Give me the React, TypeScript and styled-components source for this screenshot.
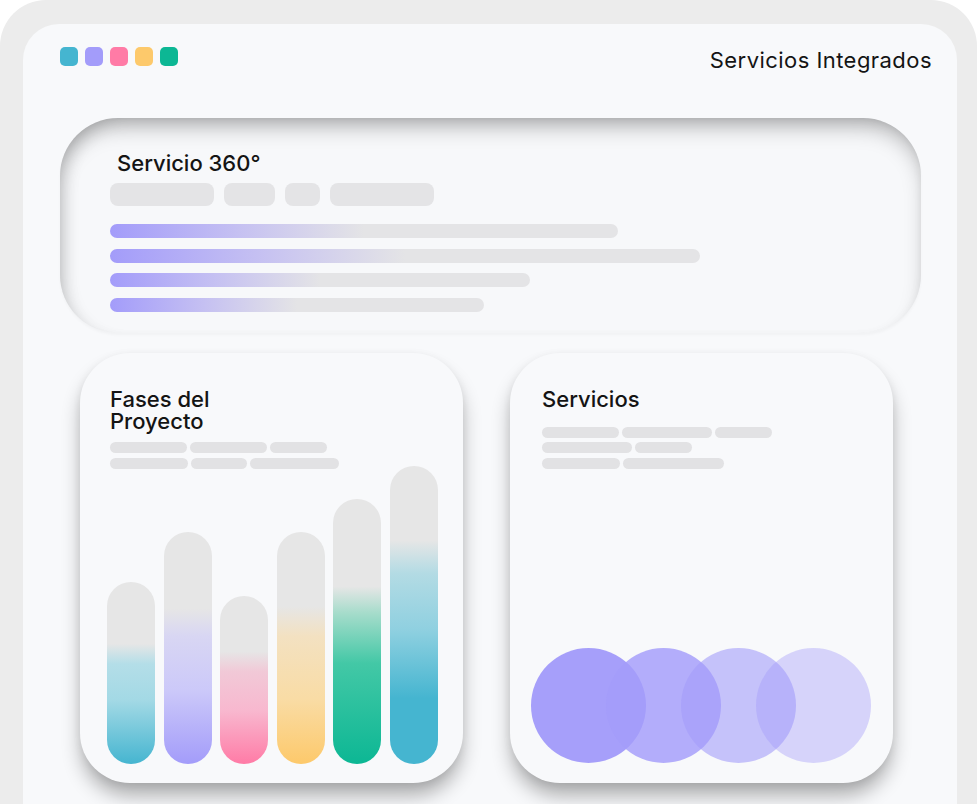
import React from "react";
import styled, { createGlobalStyle } from "styled-components";

const Global = createGlobalStyle`
  html, body { margin: 0; padding: 0; background: #ffffff; overflow: hidden; }
  body { font-family: Inter, "Liberation Sans", sans-serif; color: #141414; }
  * { box-sizing: border-box; }
`;

const Frame = styled.div`
  width: 977px;
  height: 860px;
  background: #ececec;
  border-radius: 46px 46px 0 0;
  padding: 24px 20px 0 23px;
`;

const Panel = styled.div`
  height: 100%;
  background: #f8f9fb;
  border-radius: 36px 36px 0 0;
  padding-top: 23px;
  display: flex;
  flex-direction: column;
`;

const Header = styled.header`
  height: 71px;
  padding: 0 25px 0 37px;
  display: flex;
  justify-content: space-between;
  align-items: flex-start;
`;

const Dots = styled.div`
  display: flex;
  gap: 7px;
`;

const Dot = styled.span<{ $c: string }>`
  width: 18px;
  height: 19px;
  border-radius: 5px;
  background: ${(p) => p.$c};
`;

const BrandTitle = styled.div`
  font-size: 22px;
  line-height: 26px;
  font-weight: 400;
  letter-spacing: 0.45px;
  color: #141414;
`;

const HeroCard = styled.section`
  margin: 0 36px 0 37px;
  height: 215px;
  border-radius: 58px;
  background: #f7f8fa;
  padding: 32px 0 21px 50px;
  box-shadow: inset 0 14px 22px -6px rgba(0, 0, 0, 0.28),
    inset 10px 6px 18px -8px rgba(0, 0, 0, 0.16),
    inset -4px 0 12px -6px rgba(0, 0, 0, 0.06),
    0 2px 3px rgba(0, 0, 0, 0.03);
  display: flex;
  flex-direction: column;
`;

const HeroTitle = styled.h1`
  margin: 0 0 7px 7px;
  font-size: 22px;
  line-height: 26px;
  font-weight: 500;
  color: #141414;
`;

const ChipRow = styled.div`
  display: flex;
  gap: 10px;
`;

const Chip = styled.span<{ $w: number }>`
  width: ${(p) => p.$w}px;
  height: 23px;
  border-radius: 8px;
  background: #e4e4e6;
`;

const Lines = styled.div`
  margin-top: 18px;
  display: flex;
  flex-direction: column;
  gap: 10.7px;
`;

const GradLine = styled.span<{ $w: number }>`
  width: ${(p) => p.$w}px;
  height: 14px;
  border-radius: 7px;
  background: linear-gradient(90deg, #a39cfa 0%, #c5c0f2 25%, #e4e4e6 50%, #e4e4e6 100%);
`;

const CardsRow = styled.div`
  margin: 19.5px 0 0 57px;
  display: flex;
  gap: 47px;
`;

const Card = styled.section<{ $pl: number }>`
  width: 383px;
  height: 430px;
  border-radius: 50px;
  background: #f8f9fb;
  padding-top: 35px;
  display: flex;
  flex-direction: column;
  --pl: ${(p) => p.$pl}px;
  box-shadow: 0 14px 20px -2px rgba(0, 0, 0, 0.32),
    0 2px 8px rgba(0, 0, 0, 0.06);
`;

const CardTitle = styled.h2`
  margin: 0;
  padding-left: var(--pl);
  font-size: 22px;
  line-height: 22px;
  font-weight: 500;
  color: #141414;
`;

const SkeletonBlock = styled.div<{ $mt: number }>`
  margin-top: ${(p) => p.$mt}px;
  padding-left: var(--pl);
  display: flex;
  flex-direction: column;
  gap: 4.5px;
`;

const SkeletonRow = styled.div`
  display: flex;
  gap: 3px;
`;

const Pill = styled.span<{ $w: number }>`
  width: ${(p) => p.$w}px;
  height: 11px;
  border-radius: 6px;
  background: #e2e2e4;
`;

const BarArea = styled.div`
  flex: 1;
  min-height: 0;
  margin-top: -12px;
  display: flex;
  align-items: flex-end;
  gap: 8.6px;
  padding: 0 25px 19px 27px;
`;

const Bar = styled.div<{ $h: number; $bg: string }>`
  width: 48px;
  height: ${(p) => p.$h}px;
  border-radius: 24px;
  background: ${(p) => p.$bg};
  flex: none;
`;

const CircleArea = styled.div`
  flex: 1;
  display: flex;
  align-items: flex-end;
  padding: 0 0 20px 21px;
`;

const Circle = styled.span<{ $a: number }>`
  width: 115px;
  height: 115px;
  border-radius: 50%;
  background: rgba(163, 156, 250, ${(p) => p.$a});
  flex: none;
  & + & {
    margin-left: -40px;
  }
`;

const dots = ["#45b5d0", "#a39cfa", "#ff7ba6", "#fdc96b", "#0cb794"];

const grey = "#e6e6e6";
const bars = [
  { h: 182, bg: `linear-gradient(180deg, ${grey} 0%, ${grey} 34%, #b4dee8 45%, #a3d9e5 65%, #45b5d0 100%)` },
  { h: 232, bg: `linear-gradient(180deg, ${grey} 0%, ${grey} 33%, #d8d6f3 45%, #ccc9f9 68%, #a39cfa 100%)` },
  { h: 168, bg: `linear-gradient(180deg, ${grey} 0%, ${grey} 33%, #f1c9d7 45%, #f8b8cf 68%, #ff7ba6 100%)` },
  { h: 232, bg: `linear-gradient(180deg, ${grey} 0%, ${grey} 32%, #f3e1c1 45%, #f9dca5 72%, #fdc96b 100%)` },
  { h: 265, bg: `linear-gradient(180deg, ${grey} 0%, ${grey} 33%, #a6dccb 43%, #43c8a6 62%, #0cb794 100%)` },
  { h: 298, bg: `linear-gradient(180deg, ${grey} 0%, ${grey} 25%, #b3dbe4 36%, #8fd0e0 55%, #45b5d0 78%, #45b5d0 100%)` },
];

export default function App() {
  return (
    <>
      <Global />
      <Frame>
        <Panel>
          <Header>
            <Dots>
              {dots.map((c) => (
                <Dot key={c} $c={c} />
              ))}
            </Dots>
            <BrandTitle>Servicios Integrados</BrandTitle>
          </Header>

          <HeroCard>
            <HeroTitle>Servicio 360°</HeroTitle>
            <ChipRow>
              <Chip $w={104} />
              <Chip $w={51} />
              <Chip $w={35} />
              <Chip $w={104} />
            </ChipRow>
            <Lines>
              <GradLine $w={508} />
              <GradLine $w={590} />
              <GradLine $w={420} />
              <GradLine $w={374} />
            </Lines>
          </HeroCard>

          <CardsRow>
            <Card $pl={30}>
              <CardTitle>
                Fases del
                <br />
                Proyecto
              </CardTitle>
              <SkeletonBlock $mt={10.5}>
                <SkeletonRow>
                  <Pill $w={77} />
                  <Pill $w={77} />
                  <Pill $w={57} />
                </SkeletonRow>
                <SkeletonRow>
                  <Pill $w={78} />
                  <Pill $w={56} />
                  <Pill $w={89} />
                </SkeletonRow>
              </SkeletonBlock>
              <BarArea>
                {bars.map((b, i) => (
                  <Bar key={i} $h={b.h} $bg={b.bg} />
                ))}
              </BarArea>
            </Card>

            <Card $pl={32}>
              <CardTitle>Servicios</CardTitle>
              <SkeletonBlock $mt={17}>
                <SkeletonRow>
                  <Pill $w={77} />
                  <Pill $w={90} />
                  <Pill $w={57} />
                </SkeletonRow>
                <SkeletonRow>
                  <Pill $w={90} />
                  <Pill $w={57} />
                </SkeletonRow>
                <SkeletonRow>
                  <Pill $w={78} />
                  <Pill $w={101} />
                </SkeletonRow>
              </SkeletonBlock>
              <CircleArea>
                <Circle $a={0.97} />
                <Circle $a={0.82} />
                <Circle $a={0.6} />
                <Circle $a={0.4} />
              </CircleArea>
            </Card>
          </CardsRow>
        </Panel>
      </Frame>
    </>
  );
}
